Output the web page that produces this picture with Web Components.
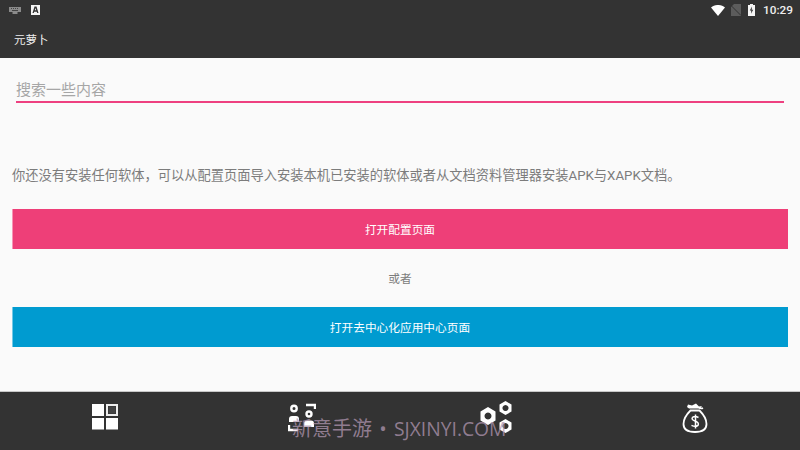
<!doctype html>
<html lang="zh">
<title>元萝卜</title>
<style>
  html, body { margin: 0; height: 100%; }
  body { font-family: Roboto, "Noto Sans CJK SC", sans-serif; overflow: hidden; }
</style>

<app-shell>
  <status-bar></status-bar>
  <app-toolbar>元萝卜</app-toolbar>
  <search-box placeholder="搜索一些内容"></search-box>
  <p-note>你还没有安装任何软体，可以从配置页面导入安装本机已安装的软体或者从文档资料管理器安装APK与XAPK文档。</p-note>
  <flat-button color="#ee3f78">打开配置页面</flat-button>
  <or-line>或者</or-line>
  <flat-button color="#009bd0">打开去中心化应用中心页面</flat-button>
  <bottom-nav></bottom-nav>
  <water-mark>新意手游 • <span>SJXINYI.COM</span></water-mark>
</app-shell>

<script type="module">
  function define(name, html) {
    customElements.define(name, class extends HTMLElement {
      constructor() {
        super();
        this.attachShadow({mode: 'open'}).innerHTML = html;
      }
    });
  }

  define('app-shell', `
    <style>
      :host { display: flex; flex-direction: column; position: relative; width: 800px; height: 450px; background: #fafafa; }
    </style>
    <slot></slot>`);

  define('status-bar', `
    <style>
      :host { display: flex; align-items: center; height: 24px; box-sizing: border-box; padding: 0 7px 4px 9px; background: #333; color: #fff; }
      .time { font: 500 11.8px Roboto, sans-serif; color: #eee; margin-left: 8px; }
      .gap { flex: 1; }
      svg { display: block; }
    </style>
    <svg width="12" height="7" viewBox="0 0 12 7"><path fill="#8a8a8a" d="M0 0h12v5H8.500v2h-5V5H0z"/><path fill="#444" d="M2 1h1v1H2zM4 1h1v1H4zM6 1h1v1H6zM8 1h1v1H8zM3 3h6v1H3z"/></svg>
    <svg style="margin-left:10px" width="9" height="10" viewBox="0 0 9 10"><path fill="#f5f5f5" d="M0 0h9v10H0z"/><path fill="#333" d="M3.500 1.500h2L7.500 8H6.200L5.800 6.700H3.200L2.800 8H1.500zM3.800 5.300h1.400L4.500 3z"/></svg>
    <span class="gap"></span>
    <svg width="14" height="11" viewBox="0 0 14 11"><path fill="#fff" d="M0 2.600C3.700-.9 10.300-.9 14 2.600L7 11z"/></svg>
    <svg style="margin-left:6px" width="10" height="12" viewBox="0 0 10 12"><path fill="#5c5c5c" d="M3 0h7v12H0V3z"/><path stroke="#333" d="M0 1.500l10 10"/></svg>
    <svg style="margin-left:7px" width="7" height="12" viewBox="0 0 7 12"><path fill="#f5f5f5" d="M2 0h3v1h2v11H0V1h2z"/><path fill="#333" d="M4 2.500L1.800 6.500h1.500L3 9.800l2.200-4H3.700z"/></svg>
    <span class="time">10:29</span>`);

  define('app-toolbar', `
    <style>
      :host { display: flex; align-items: center; height: 34px; box-sizing: border-box; padding: 0 0 5px 14px; background: #333; color: #eee; font-size: 11.5px; }
    </style>
    <slot></slot>`);

  customElements.define('search-box', class extends HTMLElement {
    constructor() {
      super();
      this.attachShadow({mode: 'open'}).innerHTML = `
        <style>
          :host { display: block; margin: 20px 16px 0; height: 25px; box-sizing: border-box; border-bottom: 2px solid #ee4080; }
          input { display: block; width: 100%; height: 23px; padding: 0; border: 0; outline: 0; background: none; font: 15px Roboto, "Noto Sans CJK SC", sans-serif; }
          input::placeholder { color: #a6a6a6; opacity: 1; }
        </style>
        <input>`;
    }
    connectedCallback() {
      this.shadowRoot.querySelector('input').placeholder = this.getAttribute('placeholder');
    }
  });

  define('p-note', `
    <style>
      :host { display: block; margin: 63px 0 23px 12px; height: 20px; line-height: 20px; font-size: 13.25px; color: #7c7c7c; white-space: nowrap; }
    </style>
    <slot></slot>`);

  customElements.define('flat-button', class extends HTMLElement {
    constructor() {
      super();
      this.attachShadow({mode: 'open'}).innerHTML = `
        <style>
          :host { display: flex; align-items: center; justify-content: center; height: 40px; box-sizing: border-box; padding: 0 1px 2px 0; margin: 0 12px; border-left: 1px solid rgba(255, 255, 255, .45); color: #fff; font-size: 11.7px; }
        </style>
        <slot></slot>`;
    }
    connectedCallback() {
      this.style.background = this.getAttribute('color');
    }
  });

  define('or-line', `
    <style>
      :host { display: flex; align-items: center; justify-content: center; height: 58px; box-sizing: border-box; padding-bottom: 2px; font-size: 11.7px; color: #7c7c7c; }
    </style>
    <slot></slot>`);

  define('bottom-nav', `
    <style>
      :host { display: grid; grid-template-columns: repeat(4, 1fr); position: absolute; left: 0; right: 0; bottom: 0; height: 59px; box-sizing: border-box; padding: 0 6.5px; background: #333; border-top: 1px solid #c8c8c8; }
      div { display: flex; justify-content: center; align-items: flex-start; }
      svg { display: block; }
    </style>
    <div style="padding-top:12px"><svg width="26" height="26" viewBox="0 0 26 26">
      <path fill="#fff" d="M0 0h12v12H0zM0 14h12v11.500H0zM14 14h12v11.500H14z"/>
      <path fill="#eee" fill-rule="evenodd" d="M14 0h12v12H14zM16 2v8h8V2z"/>
      <path fill="#444" d="M16.500 2.500h7v7h-7z"/>
    </svg></div>
    <div style="padding-top:11px"><svg width="28" height="29" viewBox="0 0 28 29" fill="none" stroke="#fff" stroke-width="2.400">
      <circle cx="6" cy="5.500" r="2.700"/><path fill="#fff" stroke="none" d="M1 19v-3q0-3 3-3h4q3 0 3 3v3z"/>
      <circle cx="21" cy="11" r="2.500"/><path fill="#fff" stroke="none" d="M16 24v-3.500q0-3 3-3h4q3 0 3 3V24z"/>
      <path d="M18 2h9v4M1 22v5h9"/>
    </svg></div>
    <div style="padding-top:8px"><svg width="33" height="34" viewBox="0 0 33 34" style="margin-left:-3px">
      <path fill="#fff" fill-rule="evenodd" d="M8 7l7.500 4.500v9L8 25 .500 20.500v-9zM8 12.500a3.500 3.500 0 1 0 .001 0z"/>
      <path fill="#fff" fill-rule="evenodd" d="M25.500 1l6 3.500v7l-6 3.500-6-3.500v-7zM25.500 5a3 3 0 1 0 .001 0z"/>
      <path fill="#fff" fill-rule="evenodd" d="M25.500 19l6 3.500v7l-6 3.500-6-3.500v-7zM25.500 23a3 3 0 1 0 .001 0z"/>
    </svg></div>
    <div style="padding-top:10px"><svg width="26" height="31" viewBox="0 0 26 31" fill="none" stroke="#fff" stroke-width="1.800">
      <path d="M8.500 8.500C4 13 1.500 17.500 1.500 22 1.500 27 5 30 13 30s11.500-3 11.500-8C24.500 17.500 22 13 17.500 8.500z"/>
      <path fill="#fff" stroke="none" d="M7 8.500V6.500h11l2-2.500-3 .500-3-3-4 2-4-1-1 2.500 2 1.500z"/>
      <path d="M17 5.500q2 1.500 4 .5"/>
      <path stroke-width="1.500" d="M16.500 15.500q-3.500-1.800-6-.2-1.500 2.200 2.500 3.700 4.500 1.500 3 4.300-2.500 2-6.500 0M13.500 12.500v14"/>
    </svg></div>`);

  define('water-mark', `
    <style>
      :host { position: absolute; left: 292px; top: 416px; font: 20px/26px "Open Sans", "Noto Sans CJK SC", sans-serif; word-spacing: 2px; color: rgba(176, 150, 176, .75); white-space: nowrap; pointer-events: none; }
      ::slotted(span) { font-size: 19.3px; }
    </style>
    <slot></slot>`);
</script>
</html>
